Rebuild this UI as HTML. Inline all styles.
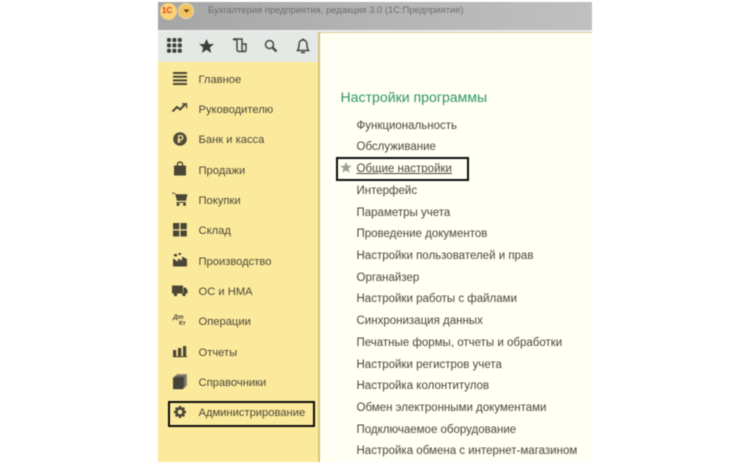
<!DOCTYPE html>
<html><head><meta charset="utf-8">
<style>
html,body{margin:0;padding:0;background:#fff;width:750px;height:464px;overflow:hidden}
body{position:relative;font-family:"Liberation Sans",sans-serif}
#w{left:0;top:0;width:750px;height:464px;filter:blur(.45px)}
div{position:absolute}
.t{white-space:nowrap;font-size:11.5px;line-height:14px;color:#4a4638}
.r{left:356.5px;margin-top:.8px}
.s{left:198.5px;font-size:11.2px;margin-top:.7px}
svg{position:absolute;overflow:visible}
</style></head><body><div id="w">
<div style="left:158px;top:2px;width:434px;height:29px;background:linear-gradient(90deg,#a6a6a6,#b4b4b4 50%,#c0c0c0)"></div>
<div style="left:158px;top:31px;width:161px;height:31px;background:#e5e9e6"></div>
<div style="left:158px;top:62px;width:161px;height:400px;background:#fcea9c"></div>
<div style="left:319px;top:31px;width:273px;height:431px;background:#fffff3"></div>
<div style="left:318px;top:31px;width:1.5px;height:431px;background:#d3c47f"></div>
<div style="left:319px;top:31px;width:273px;height:1.5px;background:#d8cd96"></div>
<div style="left:158px;top:30px;width:434px;height:1.5px;background:#ececec"></div>

<div style="left:160px;top:3px;width:17px;height:17px;border-radius:50%;background:#f9d27a"></div>
<div class="t" style="left:162px;top:5px;font-size:8px;font-weight:bold;color:#d8401a;line-height:12px">1С</div>
<div style="left:178px;top:3px;width:16px;height:16px;border-radius:50%;background:#f3c45c;border:1px solid #e8dcb0;box-sizing:border-box"></div>
<svg style="left:183px;top:9px" width="8" height="5"><path d="M0.5 0.5H6.5L3.5 3.8Z" fill="#5a4020"/></svg>
<div class="t" style="left:208px;top:3px;font-size:9.4px;color:#6c6c6c">Бухгалтерия предприятия, редакция 3.0  (1С:Предприятие)</div>

<svg style="left:167px;top:38px" width="16" height="16" fill="#3e3e3a"><rect x="0" y="0" width="4" height="4" rx="1.2"/><rect x="5.4" y="0" width="4" height="4" rx="1.2"/><rect x="10.8" y="0" width="4" height="4" rx="1.2"/><rect x="0" y="5.4" width="4" height="4" rx="1.2"/><rect x="5.4" y="5.4" width="4" height="4" rx="1.2"/><rect x="10.8" y="5.4" width="4" height="4" rx="1.2"/><rect x="0" y="10.8" width="4" height="4" rx="1.2"/><rect x="5.4" y="10.8" width="4" height="4" rx="1.2"/><rect x="10.8" y="10.8" width="4" height="4" rx="1.2"/></svg>
<svg style="left:199px;top:39px" width="16" height="15"><path d="M7.5 0L9.7 5H15L10.8 8.5L12.3 14L7.5 10.9L2.7 14L4.2 8.5L0 5H5.3Z" fill="#3f3f3c"/></svg>
<svg style="left:232px;top:38px" width="15" height="15" fill="none" stroke="#45453f" stroke-width="1.5"><path d="M1 1.5C2 .8 3 .8 4 1H10V11.5C10 13 11 13.5 13 13.5H7C5.5 13.5 5 12.5 5 11V3.5C5 2 3 1 1 1.5ZM10 6H14V11.5C14 12.8 14 13.5 13 13.5"/></svg>
<svg style="left:264px;top:39px" width="14" height="14" fill="none" stroke="#4a4a46"><circle cx="5.5" cy="5.5" r="4" stroke-width="1.5"/><path d="M8.5 8.5L12.5 12.5" stroke-width="2.4"/></svg>
<svg style="left:296px;top:38px" width="14" height="16" fill="none" stroke="#45453f" stroke-width="1.5"><path d="M1.5 12.5H12.5C11.5 11 11 9.5 11 7C11 4 9.5 2 7 2S3 4 3 7C3 9.5 2.5 11 1.5 12.5Z"/><path d="M5 14.5H9M7 .5V2" stroke-width="1.6"/></svg>

<svg style="left:173px;top:72px" width="14" height="13" fill="#4a4636"><rect width="14" height="2" y="0"/><rect width="14" height="2" y="3.7"/><rect width="14" height="2" y="7.4"/><rect width="14" height="2" y="11"/></svg>
<svg style="left:172px;top:103px" width="15" height="10" fill="none" stroke="#4a4636" stroke-width="2"><path d="M0.5 8.5L5 4L8 6.5L13 1.5"/><path d="M10 .8H14.5V5" stroke-width="1.4"/></svg>
<svg style="left:173px;top:132px" width="14" height="14"><circle cx="7" cy="7" r="6.8" fill="#4f4b3c"/><path d="M5.7 11V3.7H8.2C10.3 3.7 10.3 7.5 8.2 7.5H4.5M4.5 9.3H8" fill="none" stroke="#fcea9c" stroke-width="1.2"/></svg>
<svg style="left:174px;top:161px" width="12" height="15"><path d="M0 4.5H12V14.5H0Z" fill="#4a4636"/><path d="M3.5 6V3C3.5 .5 8.5 .5 8.5 3V6" fill="none" stroke="#4a4636" stroke-width="1.4"/></svg>
<svg style="left:172px;top:192px" width="16" height="14"><path d="M0 .8H3L3.6 2.2H15.5L14 8.8H5L3 1.8H0Z" fill="#4a4636"/><path d="M4.5 10H14V11H4.5Z" fill="#4a4636"/><circle cx="6" cy="12.5" r="1.5" fill="#4a4636"/><circle cx="12.5" cy="12.5" r="1.5" fill="#4a4636"/></svg>
<svg style="left:173px;top:223px" width="14" height="14" fill="#4a4636"><rect width="6.3" height="6.3" x="0" y="0"/><rect width="6.3" height="6.3" x="7.5" y="0"/><rect width="6.3" height="6" x="0" y="7.5"/><rect width="6.3" height="6" x="7.5" y="7.5"/></svg>
<svg style="left:173px;top:253px" width="14" height="14" fill="#4a4636"><path d="M0 13.5V5.5L5 8.5V5.5L9 7.5V3.5L14 6V13.5Z"/><rect x="1" y="1" width="3" height="2.5"/><rect x="5.5" y="0" width="2.5" height="2"/></svg>
<svg style="left:172px;top:285px" width="16" height="12" fill="#4a4636"><rect x="0" y="0.5" width="11" height="8"/><path d="M11.5 2.5H13.5L15.5 5V8.5H11.5Z"/><circle cx="3.5" cy="9.5" r="1.7"/><circle cx="12" cy="9.5" r="1.7"/></svg>
<div class="t" style="left:173px;top:314px;font-size:6.5px;font-weight:bold;font-style:italic;line-height:7px;color:#4a4636">Дт</div>
<div class="t" style="left:179px;top:321px;font-size:6px;font-weight:bold;line-height:7px;color:#4a4636">Кт</div>
<svg style="left:173px;top:346px" width="14" height="11" fill="#4a4636"><rect x="0" y="4" width="3.2" height="7"/><rect x="5" y="2" width="3.2" height="9"/><rect x="10" y="0" width="3.2" height="11"/><rect x="0" y="10.2" width="14" height="1"/></svg>
<svg style="left:173px;top:374px" width="14" height="16"><rect x="3.5" y="0" width="10.5" height="12" fill="#8d8977"/><rect x="1.8" y="1.6" width="10.5" height="12" fill="#6b6756"/><rect x="0" y="3.2" width="10.5" height="12" fill="#45433a"/></svg>
<svg style="left:173px;top:405px" width="14" height="14" viewBox="-8 -8 16 16"><circle r="4.6" fill="none" stroke="#4a4636" stroke-width="2.4"/><path d="M-1.2-7H1.2V7H-1.2ZM-7-1.2H7V1.2H-7Z" fill="#4a4636"/><path d="M-1.1-7H1.1V7H-1.1ZM-7-1.1H7V1.1H-7Z" fill="#4a4636" transform="rotate(45)"/><circle r="2.6" fill="#fcea9c"/></svg>

<div class="t s" style="top:72px">Главное</div>
<div class="t s" style="top:102px">Руководителю</div>
<div class="t s" style="top:132.5px">Банк и касса</div>
<div class="t s" style="top:163px">Продажи</div>
<div class="t s" style="top:193px">Покупки</div>
<div class="t s" style="top:223.5px">Склад</div>
<div class="t s" style="top:254px">Производство</div>
<div class="t s" style="top:284px">ОС и НМА</div>
<div class="t s" style="top:314.5px">Операции</div>
<div class="t s" style="top:345px">Отчеты</div>
<div class="t s" style="top:375px">Справочники</div>
<div class="t s" style="top:405.5px">Администрирование</div>
<div style="left:168px;top:401px;width:147px;height:26px;border:2.5px solid #0a0a0a;box-sizing:border-box"></div>

<div class="t" style="left:340.5px;top:89px;font-size:14.1px;line-height:16px;color:#2f9468">Настройки программы</div>
<div class="t r" style="top:118px">Функциональность</div>
<div class="t r" style="top:139px">Обслуживание</div>
<svg style="left:340px;top:162px" width="12" height="11"><path d="M6 0L7.6 3.8H11.8L8.5 6.5L9.7 10.8L6 8.4L2.3 10.8L3.5 6.5L.2 3.8H4.4Z" fill="#a09f95"/></svg>
<div class="t r" style="top:161px;text-decoration:underline">Общие настройки</div>
<div style="left:336px;top:157px;width:133px;height:24px;border:2.5px solid #0a0a0a;box-sizing:border-box"></div>
<div class="t r" style="top:183px">Интерфейс</div>
<div class="t r" style="top:205px">Параметры учета</div>
<div class="t r" style="top:226px">Проведение документов</div>
<div class="t r" style="top:248px">Настройки пользователей и прав</div>
<div class="t r" style="top:270px">Органайзер</div>
<div class="t r" style="top:291px">Настройки работы с файлами</div>
<div class="t r" style="top:313px">Синхронизация данных</div>
<div class="t r" style="top:335px">Печатные формы, отчеты и обработки</div>
<div class="t r" style="top:357px">Настройки регистров учета</div>
<div class="t r" style="top:378px">Настройка колонтитулов</div>
<div class="t r" style="top:400px">Обмен электронными документами</div>
<div class="t r" style="top:422px">Подключаемое оборудование</div>
<div class="t r" style="top:443px">Настройка обмена с интернет-магазином</div>
</div></body></html>
